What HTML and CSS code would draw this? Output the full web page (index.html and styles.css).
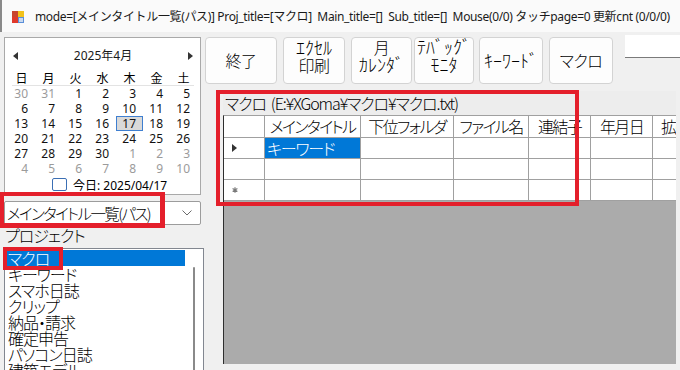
FILE: index.html
```html
<!DOCTYPE html>
<html lang="ja">
<head>
<meta charset="utf-8">
<title>XGoma</title>
<link rel="stylesheet" href="styles.css">
</head>
<body>
<div class="window">
  <header class="titlebar">
    <svg class="appicon" width="12" height="12" viewBox="0 0 12 12">
      <rect x="0" y="0" width="6" height="6" fill="#c9452e"/>
      <rect x="6" y="0" width="6" height="6" fill="#f2c21a"/>
      <rect x="0" y="6" width="6" height="6" fill="#e0392b"/>
      <rect x="6" y="6" width="6" height="6" fill="#5a8fd8"/>
      <rect x="7" y="7" width="4" height="4" fill="#c9d9ef"/>
    </svg>
    <span class="title">mode=[メインタイトル一覧(パス)] Proj_title=[マクロ]&nbsp; Main_title=[]&nbsp; Sub_title=[]&nbsp; Mouse(0/0) タッチpage=0 更新cnt (0/0/0)</span>
  </header>

  <div class="main">
    <aside class="left">
      <div class="calendar">
        <div class="cal-head">
          <svg class="cal-arrow" width="5" height="8" viewBox="0 0 5 8"><path d="M5 0 L0 4 L5 8 Z" fill="#333"/></svg>
          <span class="cal-month">2025年4月</span>
          <svg class="cal-arrow" width="5" height="8" viewBox="0 0 5 8"><path d="M0 0 L5 4 L0 8 Z" fill="#333"/></svg>
        </div>
        <div class="cal-days">
          <span>日</span><span>月</span><span>火</span><span>水</span><span>木</span><span>金</span><span>土</span>
        </div>
        <div class="cal-sep"></div>
        <div class="cal-grid">
          <span class="other">30</span><span class="other">31</span><span>1</span><span>2</span><span>3</span><span>4</span><span>5</span>
          <span>6</span><span>7</span><span>8</span><span>9</span><span>10</span><span>11</span><span>12</span>
          <span>13</span><span>14</span><span>15</span><span>16</span><span class="sel">17</span><span>18</span><span>19</span>
          <span>20</span><span>21</span><span>22</span><span>23</span><span>24</span><span>25</span><span>26</span>
          <span>27</span><span>28</span><span>29</span><span>30</span><span class="other">1</span><span class="other">2</span><span class="other">3</span>
          <span class="other">4</span><span class="other">5</span><span class="other">6</span><span class="other">7</span><span class="other">8</span><span class="other">9</span><span class="other">10</span>
        </div>
        <div class="cal-today">
          <span class="today-box"></span>
          <span>今日: 2025/04/17</span>
        </div>
      </div>

      <div class="combo">
        <span class="combo-text">メインタイトル一覧(パス)</span>
        <svg class="combo-chevron" width="10" height="6" viewBox="0 0 10 6"><path d="M0.5 0.5 L5 5 L9.5 0.5" fill="none" stroke="#6b6b6b" stroke-width="1"/></svg>
      </div>

      <div class="proj-label">プロジェクト</div>

      <div class="listbox">
        <ul class="items">
          <li class="selected">マクロ</li>
          <li>キーワード</li>
          <li>スマホ日誌</li>
          <li>クリップ</li>
          <li>納品・請求</li>
          <li>確定申告</li>
          <li>パソコン日誌</li>
          <li>建築モデル</li>
        </ul>
        <div class="vscroll"><div class="thumb"></div></div>
      </div>
    </aside>

    <section class="right">
      <div class="toolbar">
        <button class="btn w72">終了</button>
        <button class="btn w62 two"><span class="hwk">ｴｸｾﾙ</span><br>印刷</button>
        <button class="btn w61 two">月<br><span class="hwk">ｶﾚﾝﾀﾞ</span></button>
        <button class="btn w60 two g2"><span class="hwk">ﾃﾊﾞｯｸﾞ</span><br><span class="hwk">ﾓﾆﾀ</span></button>
        <button class="btn w64 g5"><span class="hwk">ｷｰﾜｰﾄﾞ</span></button>
        <button class="btn w64">マクロ</button>
        <div class="textbox"></div>
      </div>

      <div class="grid-section">
        <div class="grid-label">マクロ&nbsp; (E:¥XGoma¥マクロ¥マクロ.txt)</div>
        <div class="grid-panel">
          <div class="table">
            <div class="cell rh"></div>
            <div class="cell hd">メインタイトル</div>
            <div class="cell hd">下位フォルダ</div>
            <div class="cell hd">ファイル名</div>
            <div class="cell hd">連結子</div>
            <div class="cell hd">年月日</div>
            <div class="cell hd">拡張子</div>

            <div class="cell rh"><svg width="5" height="8" viewBox="0 0 5 8"><path d="M0 0 L5 4 L0 8 Z" fill="#333"/></svg></div>
            <div class="cell active">キーワード</div>
            <div class="cell"></div><div class="cell"></div><div class="cell"></div><div class="cell"></div><div class="cell"></div>

            <div class="cell rh"></div>
            <div class="cell"></div><div class="cell"></div><div class="cell"></div><div class="cell"></div><div class="cell"></div><div class="cell"></div>

            <div class="cell rh"><svg width="6" height="6" viewBox="0 0 6 6"><path d="M3 0.3 V5.7 M0.6 1.6 L5.4 4.4 M0.6 4.4 L5.4 1.6" stroke="#7a7a7a" stroke-width="1.2"/></svg></div>
            <div class="cell"></div><div class="cell"></div><div class="cell"></div><div class="cell"></div><div class="cell"></div><div class="cell"></div>
          </div>
        </div>
      </div>
    </section>
  </div>

  <div class="mark mark-combo"></div>
  <div class="mark mark-item"></div>
  <div class="mark mark-grid"></div>
</div>
</body>
</html>
```
FILE: styles.css
```css
* { box-sizing: border-box; }

html, body {
  margin: 0;
  padding: 0;
}

body {
  width: 680px;
  height: 370px;
  overflow: hidden;
  background: #f0f0f0;
  font-family: "Noto Sans CJK JP", sans-serif;
  font-feature-settings: "palt";
  font-weight: 300;
  color: #000;
}

.window {
  position: relative;
  width: 680px;
  height: 370px;
  display: flex;
  flex-direction: column;
}

/* ---------- title bar ---------- */
.titlebar {
  height: 32px;
  flex: none;
  display: flex;
  align-items: center;
  padding-left: 12px;
  background: #fafafa;
  border-left: 2px solid #8a8a8a;
}

.appicon {
  flex: none;
  margin-left: -2px;
  margin-top: 1px;
}

.title {
  margin-left: 11px;
  font-family: "Noto Sans", "Noto Sans CJK JP", sans-serif;
  font-feature-settings: normal;
  font-weight: 400;
  font-size: 12px;
  white-space: nowrap;
  color: #1a1a1a;
  letter-spacing: -0.35px;
}

/* ---------- main ---------- */
.main {
  flex: 1;
  display: flex;
  min-height: 0;
}

.left {
  width: 205px;
  flex: none;
  padding: 5px 0 0 4px;
  display: flex;
  flex-direction: column;
}

/* calendar */
.calendar {
  width: 197px;
  height: 158px;
  flex: none;
  background: #fff;
  border: 1px solid #a9a9a9;
  padding-top: 10px;
  font-family: "Noto Sans", "Noto Sans CJK JP", sans-serif;
  font-feature-settings: normal;
  font-weight: 400;
  font-size: 12px;
}

.cal-head {
  height: 16px;
  display: flex;
  align-items: center;
  justify-content: space-between;
  padding: 0 7px 0 8px;
}

.cal-arrow { display: block; }

.cal-month {
  line-height: 16px;
  color: #1a1a1a;
}

.cal-days {
  margin-top: 6px;
  padding-left: 3px;
  display: grid;
  grid-template-columns: repeat(7, 27px);
  height: 15px;
  line-height: 15px;
  font-family: "Noto Sans CJK JP", sans-serif;
}

.cal-days span { text-align: center; }

.cal-sep {
  height: 1px;
  margin: 0 6px 0 7px;
  background: #e3e3e3;
}

.cal-grid {
  padding-left: 3px;
  display: grid;
  grid-template-columns: repeat(7, 27px);
  grid-auto-rows: 15px;
  line-height: 15px;
}

.cal-grid span {
  text-align: right;
  padding-right: 7px;
  color: #111;
}

.cal-grid span.other { color: #9b9b9b; }

.cal-grid span.sel {
  background: #d9d9d9;
  border: 1px solid #3f7fd0;
  line-height: 13px;
  padding-right: 6px;
}

.cal-today {
  margin-top: 1px;
  height: 15px;
  display: flex;
  align-items: center;
  padding-left: 47px;
}

.today-box {
  width: 15px;
  height: 13px;
  border: 1.5px solid #3b6fb4;
  border-radius: 2px;
  margin-right: 6px;
}

/* combobox */
.combo {
  margin-top: 6px;
  width: 197px;
  height: 24px;
  flex: none;
  background: #fff;
  border: 1px solid #9c9c9c;
  border-radius: 2px;
  display: flex;
  align-items: center;
  justify-content: space-between;
  padding: 0 8px 0 2px;
}

.combo-text {
  font-size: 15.5px;
  line-height: 18px;
  white-space: nowrap;
  letter-spacing: -1.6px;
}

.combo-chevron { display: block; }

.proj-label {
  margin-top: 1px;
  height: 18px;
  line-height: 18px;
  font-size: 16px;
  letter-spacing: -1px;
  padding-left: 1px;
  margin-bottom: 4px;
}

/* listbox */
.listbox {
  width: 200px;
  flex: 1;
  min-height: 0;
  background: #fff;
  border: 1px solid #828790;
  border-bottom: none;
  display: flex;
  padding-top: 1px;
  overflow: hidden;
}

.items {
  list-style: none;
  margin: 0;
  padding: 0;
  width: 180px;
  flex: none;
}

.items li {
  height: 16px;
  line-height: 16px;
  font-size: 16px;
  letter-spacing: -1px;
  padding-left: 3px;
  white-space: nowrap;
}

.items li.selected {
  background: #0078d7;
  color: #fff;
}

.vscroll {
  flex: 1;
  padding: 17px 0 0 8px;
}

.thumb {
  width: 2px;
  height: 200px;
  background: #8a8a8a;
  border-radius: 1px 1px 0 0;
}

/* ---------- right ---------- */
.right {
  flex: 1;
  min-width: 0;
  display: flex;
  flex-direction: column;
}

.toolbar {
  height: 52px;
  flex: none;
  display: flex;
  align-items: flex-start;
  padding-top: 3px;
}

.btn {
  margin-top: 2px;
  height: 47px;
  padding: 0;
  background: #fdfdfd;
  border: 1px solid #d3d3d3;
  border-radius: 4px;
  font-family: "Noto Sans CJK JP", sans-serif;
  font-feature-settings: "palt";
  font-weight: 300;
  font-size: 16px;
  line-height: 17px;
  letter-spacing: -0.5px;
  color: #000;
  margin-left: 6px;
  flex: none;
}

.btn .hwk {
  font-size: 18px;
  letter-spacing: 0;
}

.btn:first-child { margin-left: 0; }
.btn.two { padding-bottom: 9px; }
.btn.g2 { margin-left: 2px; }
.btn.g5 { margin-left: 5px; }
.w72 { width: 72px; }
.w62 { width: 62px; }
.w61 { width: 61px; }
.w60 { width: 60px; }
.w64 { width: 64px; }

.textbox {
  margin-left: 12px;
  flex: 1;
  height: 23px;
  background: #fff;
  border-bottom: 1px solid #7a7a7a;
}

/* grid */
.grid-section {
  flex: 1;
  min-height: 0;
  margin: 7px 4px 0 18px;
  display: flex;
  flex-direction: column;
}

.grid-label {
  height: 24px;
  line-height: 24px;
  font-size: 16px;
  padding-left: 2px;
  white-space: nowrap;
  background: #ededed;
  letter-spacing: -1.1px;
}

.grid-panel {
  height: 249px;
  flex: none;
  background: #ababab;
  border-left: 1px solid #2e2e2e;
  border-top: 1px solid #a0a0a0;
  overflow: hidden;
}

.table {
  display: grid;
  grid-template-columns: 41px 96px 93px 75px 62px 62px 60px;
  grid-template-rows: 22px 21px 21px 21px;
  width: 489px;
}

.cell {
  background: #fff;
  border-right: 1px solid #a0a0a0;
  border-bottom: 1px solid #a0a0a0;
  font-size: 16px;
  line-height: 20px;
  letter-spacing: -1.2px;
  white-space: nowrap;
  overflow: hidden;
}

.cell.hd {
  text-align: center;
  letter-spacing: -1.7px;
}

.cell.rh {
  display: flex;
  align-items: center;
  padding-left: 8px;
}

.cell.rh svg { display: block; }

.cell.active {
  background: #0078d7;
  color: #fff;
  padding-left: 2px;
}

/* ---------- red annotation boxes ---------- */
.mark {
  position: absolute;
  border: 4px solid #e41f2b;
  pointer-events: none;
}

.mark-combo {
  left: 0;
  top: 192px;
  width: 165px;
  height: 36px;
  border-width: 4px 5px 5px 4px;
}

.mark-item {
  left: 3px;
  top: 247px;
  width: 60px;
  height: 23px;
}

.mark-grid {
  left: 216px;
  top: 90px;
  width: 363px;
  height: 116px;
}
```
